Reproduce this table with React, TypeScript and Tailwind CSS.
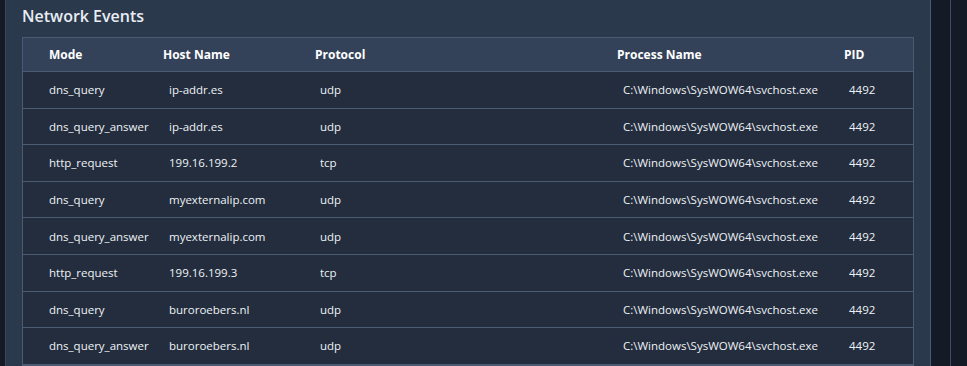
const rows = [
  { mode: "dns_query", host: "ip-addr.es", protocol: "udp" },
  { mode: "dns_query_answer", host: "ip-addr.es", protocol: "udp" },
  { mode: "http_request", host: "199.16.199.2", protocol: "tcp" },
  { mode: "dns_query", host: "myexternalip.com", protocol: "udp" },
  { mode: "dns_query_answer", host: "myexternalip.com", protocol: "udp" },
  { mode: "http_request", host: "199.16.199.3", protocol: "tcp" },
  { mode: "dns_query", host: "buroroebers.nl", protocol: "udp" },
  { mode: "dns_query_answer", host: "buroroebers.nl", protocol: "udp" },
];

export default function App() {
  return (
    <div
      className="flex h-[366px] w-[967px] overflow-hidden bg-[#151b26]"
      style={{ fontFamily: '"Open Sans", "Noto Sans", sans-serif' }}
    >
      <div className="w-[6px] shrink-0 border-r border-[#3a475b]" />
      <div className="w-[925px] shrink-0 border-r border-[#4a5a72] bg-[#2b394d] px-[16px] pt-[4px]">
        <h2 className="text-[16px] font-semibold leading-[24px] text-[#e8edf3]">Network Events</h2>
        <div className="mt-[9px] w-[892px] border border-[#4b5b73]">
          <div className="flex h-[34px] items-center border-b border-[#4b5b73] bg-[#334259] text-[12px] font-bold text-white">
            <div className="w-[140px] pl-[26px]">Mode</div>
            <div className="w-[152px]">Host Name</div>
            <div className="w-[302px]">Protocol</div>
            <div className="w-[227px]">Process Name</div>
            <div>PID</div>
          </div>
          {rows.map((row, i) => (
            <div
              key={i}
              className="flex h-[36.6px] items-center border-b border-[#4b5b73] bg-[#232d3d] text-[11.5px] font-medium text-[#eef2f6]"
            >
              <div className="w-[146px] pl-[26px]">{row.mode}</div>
              <div className="w-[151px]">{row.host}</div>
              <div className="w-[303px]">{row.protocol}</div>
              <div className="w-[226px]">C:\Windows\SysWOW64\svchost.exe</div>
              <div>4492</div>
            </div>
          ))}
        </div>
      </div>
      <div className="w-[20px] shrink-0 border-r border-[#3e4b5e]" />
    </div>
  );
}
